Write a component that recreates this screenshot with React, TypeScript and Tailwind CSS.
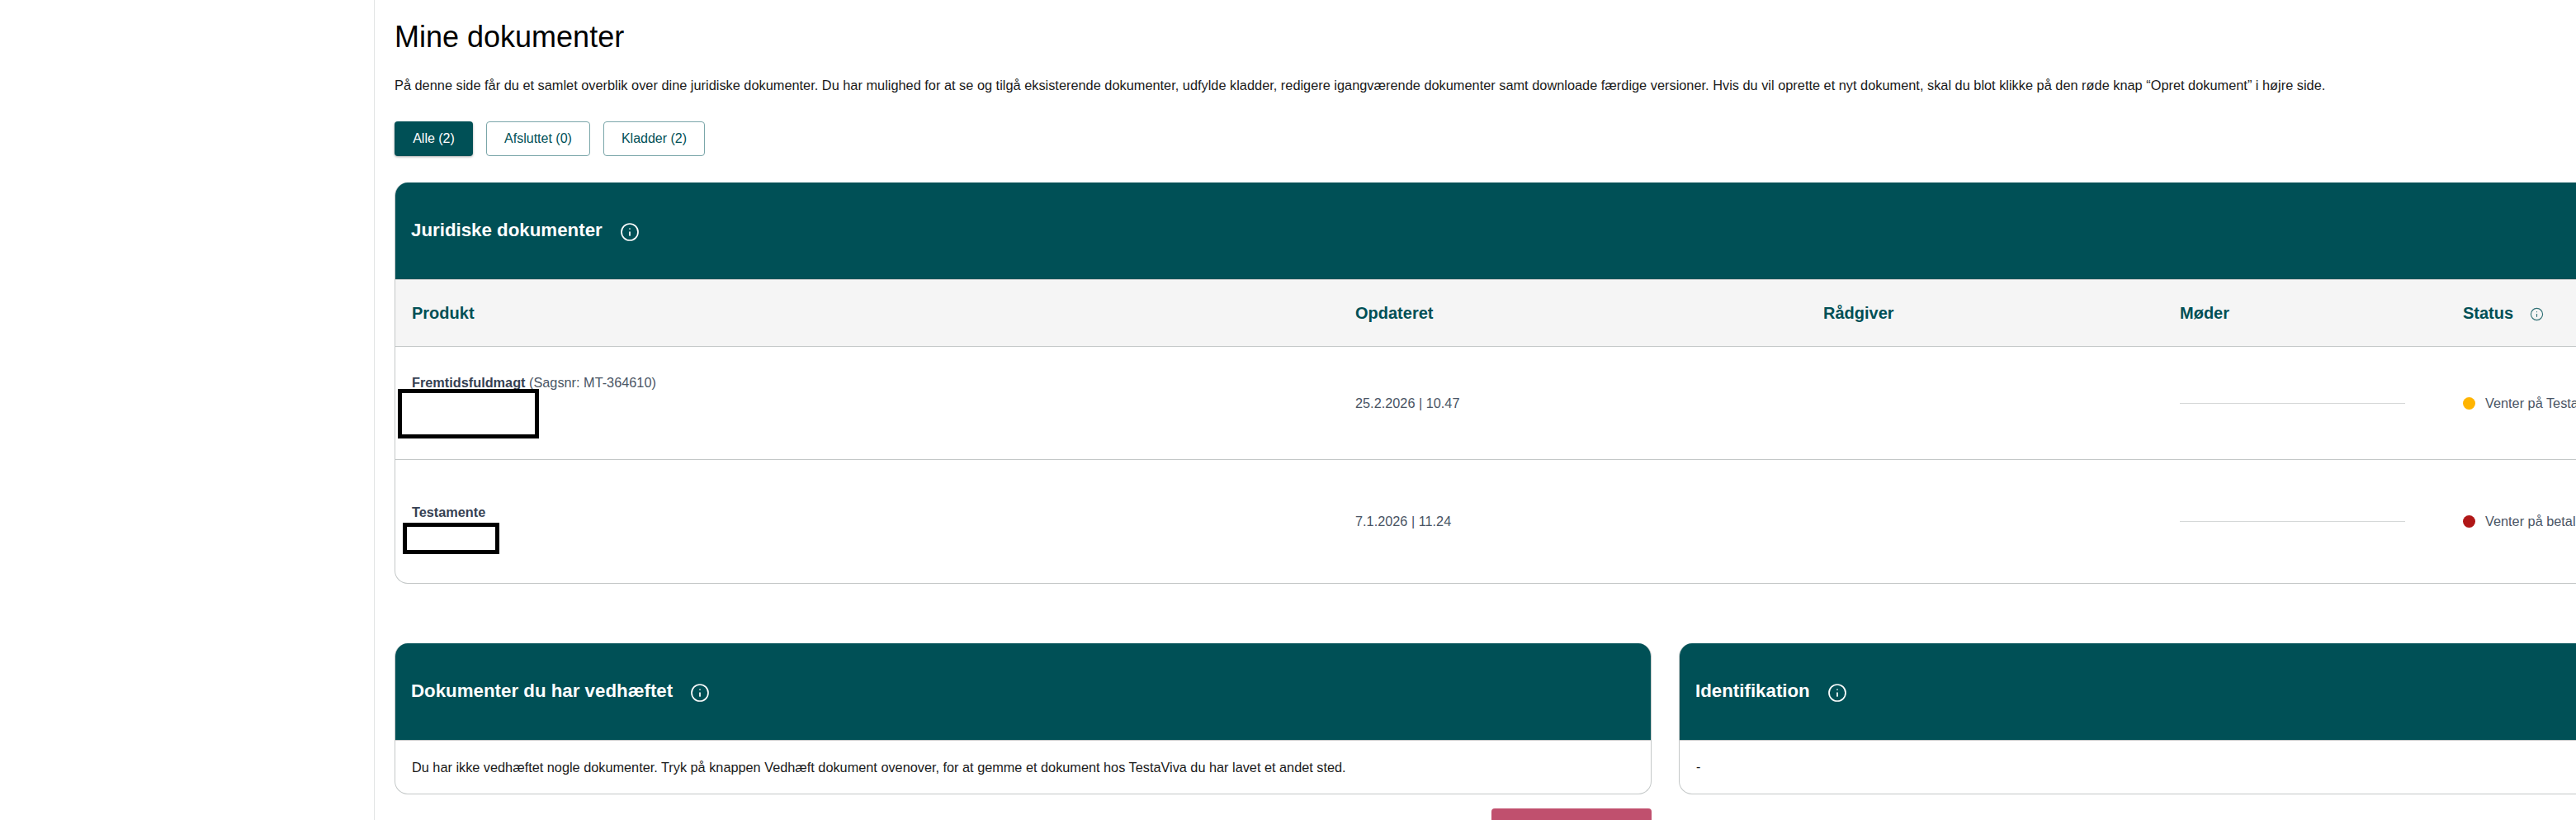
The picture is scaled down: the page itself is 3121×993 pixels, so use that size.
import { Info } from "lucide-react";

function PanelHeader({ title }: { title: string }) {
  return (
    <div className="-mx-px flex h-[118px] items-center gap-[21px] border-b border-[#c4c8c8] bg-[#005056] pl-5 text-white">
      <h2 className="text-[22.3px] leading-none font-bold">{title}</h2>
      <Info size={24} strokeWidth={1.7} className="mt-[3px]" />
    </div>
  );
}

function TableRow({
  name,
  caseNo,
  date,
  status,
  dot,
  rowClass,
  spacerClass,
  boxClass,
}: {
  name: string;
  caseNo?: string;
  date: string;
  status: string;
  dot: string;
  rowClass: string;
  spacerClass: string;
  boxClass: string;
}) {
  return (
    <div className={`grid grid-cols-[1143px_567px_432px_343px_1fr] items-center pl-5 text-[16.3px] text-gray-600 ${rowClass}`}>
      <div>
        <p className="leading-6 whitespace-nowrap">
          <span className="font-bold text-gray-700">{name}</span>
          {caseNo && <span> {caseNo}</span>}
        </p>
        <div className={`relative ${spacerClass}`}>
          <div className={`absolute border-[5px] border-black bg-white ${boxClass}`} />
        </div>
      </div>
      <p>{date}</p>
      <div />
      <div className="h-px w-[273px] bg-[#d5d8d8]" />
      <div className="flex items-center gap-3 whitespace-nowrap">
        <span className={`h-[15px] w-[15px] rounded-full ${dot}`} />
        <span>{status}</span>
      </div>
    </div>
  );
}

export default function App() {
  return (
    <div className="flex h-[993px] w-[3121px] overflow-hidden bg-white font-['Liberation_Sans',Arial,sans-serif] text-base text-[#1a1a1a]">
      <aside className="w-[454px] shrink-0 border-r border-[#e2e4e4]" />

      <main className="w-[3103px] shrink-0 pl-6">
        <h1 className="pt-[25px] text-4xl leading-10 text-black">Mine dokumenter</h1>
        <p className="mt-[26px] text-[16.35px] leading-6 whitespace-nowrap">
          På denne side får du et samlet overblik over dine juridiske dokumenter. Du har mulighed for at se og tilgå eksisterende dokumenter, udfylde kladder, redigere igangværende dokumenter samt downloade færdige versioner. Hvis du vil oprette et nyt dokument, skal du blot klikke på den røde knap “Opret dokument” i højre side.
        </p>

        <div className="mt-8 flex gap-4">
          <button className="h-[42px] w-[95px] rounded-[4px] bg-[#005056] text-white shadow-[0_1px_3px_rgba(0,0,0,0.35)]">Alle (2)</button>
          <button className="h-[42px] w-[126px] rounded-[4px] border border-[#7aa6a9] text-[#005056]">Afsluttet (0)</button>
          <button className="h-[42px] w-[123px] rounded-[4px] border border-[#7aa6a9] text-[#005056]">Kladder (2)</button>
        </div>

        <section className="mt-8 overflow-hidden rounded-2xl border-x border-b border-[#c4c8c8]">
          <PanelHeader title="Juridiske dokumenter" />
          <div className="grid h-[81px] grid-cols-[1143px_567px_432px_343px_1fr] items-center border-b border-[#c4c8c8] bg-[#f5f5f5] pl-5 text-xl font-bold text-[#005056]">
            <span>Produkt</span>
            <span>Opdateret</span>
            <span>Rådgiver</span>
            <span>Møder</span>
            <span className="flex items-center gap-[20px]">
              Status
              <Info size={17} strokeWidth={1.6} className="mt-[2px] opacity-80" />
            </span>
          </div>
          <TableRow
            name="Fremtidsfuldmagt"
            caseNo="(Sagsnr: MT-364610)"
            date="25.2.2026 | 10.47"
            status="Venter på TestaViva"
            dot="bg-[#ffb400]"
            rowClass="h-[137px] border-b border-[#c4c8c8]"
            spacerClass="h-[50px]"
            boxClass="-left-[17px] -top-1 h-[60px] w-[171px]"
          />
          <TableRow
            name="Testamente"
            date="7.1.2026 | 11.24"
            status="Venter på betaling"
            dot="bg-[#b01717]"
            rowClass="h-[149px]"
            spacerClass="h-6"
            boxClass="-left-[11px] top-px h-[38px] w-[117px]"
          />
        </section>

        <div className="mt-[72px] grid grid-cols-2 gap-[33px]">
          <div>
            <section className="overflow-hidden rounded-2xl border-x border-b border-[#c4c8c8]">
              <PanelHeader title="Dokumenter du har vedhæftet" />
              <p className="flex h-[64px] items-center pl-5 text-[16.3px]">
                Du har ikke vedhæftet nogle dokumenter. Tryk på knappen Vedhæft dokument ovenover, for at gemme et dokument hos TestaViva du har lavet et andet sted.
              </p>
            </section>
            <div className="mt-[17px] flex justify-end">
              <button className="h-[42px] w-[194px] rounded-[4px] bg-[#c0506e]" />
            </div>
          </div>
          <section className="h-fit overflow-hidden rounded-2xl border-x border-b border-[#c4c8c8]">
            <PanelHeader title="Identifikation" />
            <p className="flex h-[64px] items-center pl-5">-</p>
          </section>
        </div>
      </main>
    </div>
  );
}
